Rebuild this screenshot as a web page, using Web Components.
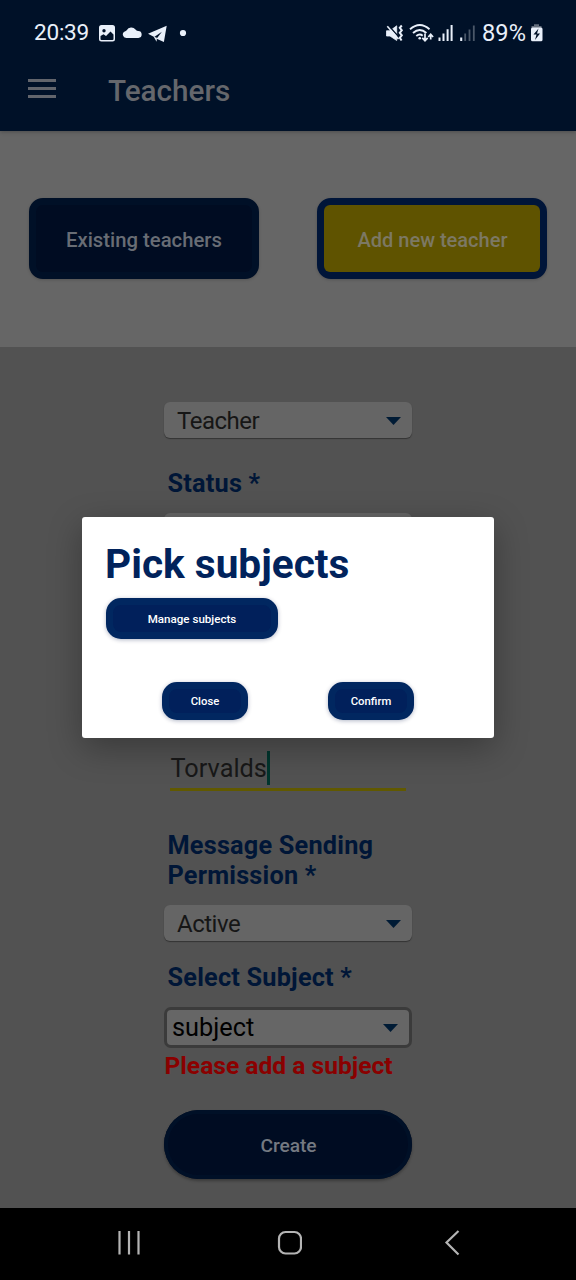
<!DOCTYPE html>
<html lang="en"><head><meta charset="utf-8"><title>Teachers</title>
<style>html,body{margin:0;padding:0;background:#000}body{font-family:Roboto,"Liberation Sans",sans-serif;width:576px;height:1280px;overflow:hidden}</style>
</head><body>
<teachers-app></teachers-app>
<script>
const define = (name, html) => customElements.define(name, class extends HTMLElement {
  constructor() {
    super();
    const t = document.createElement('template');
    t.innerHTML = html;
    this.attachShadow({ mode: 'open' }).append(t.content.cloneNode(true));
  }
});

define('status-bar', `
<style>
:host{display:flex;height:66px;box-sizing:border-box;padding:0 33px 0 34px;align-items:center;color:#e9f0fa;font-size:22.6px;line-height:26px}
svg{display:block;flex:none}
.t{letter-spacing:-.25px;width:64px}
.l{width:104px}
.r{margin-left:auto;width:98px}
.p{width:48px;letter-spacing:.1px;font-size:23.600px;white-space:nowrap}
</style>
<span class="t">20:39</span>
<svg class="l" width="104" height="26" viewBox="98 20 104 26" fill="#e9f0fa">
 <path fill-rule="evenodd" d="M101.500 25h11a2.500 2.500 0 0 1 2.500 2.500v11.500a2.500 2.500 0 0 1-2.500 2.500h-11a2.500 2.500 0 0 1-2.500-2.500v-11.500a2.500 2.500 0 0 1 2.500-2.500zM100.500 36v3q0 1 1 1h11q1 0 1-1v-4.500l-3-3-4.500 4.500-2.500-1.800zM104 29a1.700 1.700 0 1 0 0 3.400 1.700 1.700 0 0 0 0-3.400z"/>
 <path d="M126.300 38a3.500 3.500 0 0 1-1.600-6.600q1.300-.5 2-1.200a5.300 5.300 0 0 1 8.800-.6q.8 1.200 2.500 1.400a3.500 3.500 0 0 1 .3 7z"/>
 <path d="M148 33.700L166.700 25.700l-2.800 16.300-7.300-3.300 5.300-6.900-7.700 5.300z"/><path d="M153.700 36.800l3.200 1-.3 3.900z"/>
 <circle cx="183" cy="33" r="3.100"/>
</svg>
<svg class="r" width="98" height="26" viewBox="384 20 98 26" fill="none" stroke="#e9f0fa">
 <path fill="#e9f0fa" stroke-width=".8" stroke-linejoin="round" d="M386.500 30.800h3.500l6.700-5v14.700l-6.700-4.500h-3.500z"/>
 <path d="M388.500 25.500L399 37.300" stroke="#001128" stroke-width="1.400"/><path d="M387.300 26.300L398.500 39" stroke-width="1.600"/>
 <path d="M401.800 25.500l-2 2.300 2 2.500-2 2.500 2 2.500-2 2.500 1.800 2.700" stroke-width="2"/>
 <path d="M410 29.300q9.800-8.600 19.500 0M413 33q6.700-5.800 13.400 0M416.300 36q3.400-2.800 6.400-.3" stroke-width="1.900"/>
 <circle cx="419.700" cy="38.200" r="1.300" fill="#e9f0fa" stroke="none"/>
 <path d="M425 33.500v6.800M422.300 37.800l2.700 2.900 2.700-2.900M430.700 39.500v-5M428.300 37l2.400-2.700 2.400 2.700" stroke-width="1.700"/>
 <path d="M439.500 37.500v3.500M443.500 33.500v7.500M447.600 29.300v11.700M451.600 25v16" stroke-width="2"/>
 <path d="M461.200 37.500v3.500" stroke-width="2.100"/><path d="M465.200 33.500v7.500M469.500 29.500v11.500M473.800 25.500v15.500" stroke="#4b5869" stroke-width="1.800"/>
</svg>
<span class="p">89%</span>
<svg width="13" height="26" viewBox="530 20 13 26"><path d="M531.500 28v-2h2.500v-1.800h5v1.800h2.500v2z" fill="#626c7b"/><rect x="531" y="27.500" width="11.500" height="13.700" rx="1.500" fill="#e9f0fa"/><path d="M538.500 28.500l-5 6h3l-1.500 5.500 5-6.500h-3z" fill="#001128"/></svg>
`);

define('app-bar', `
<style>
:host{display:flex;height:65px;align-items:flex-start;color:#65676c;padding-left:28px}
.m{display:flex;flex-direction:column;gap:5px;padding-top:13px;width:28px}
.m i{height:3px;background:#62656c}
h1{margin:0 0 0 52px;font-size:29.700px;line-height:36px;font-weight:500;padding-top:7px}
</style>
<div class="m"><i></i><i></i><i></i></div><h1><slot></slot></h1>
`);

define('tab-button', `
<style>
:host{display:flex;box-sizing:border-box;width:230px;height:81px;border:7px solid #001027;border-radius:14px;background:#000c22;color:#686d75;font-size:20.300px;font-weight:500;align-items:center;justify-content:center;box-shadow:0 1px 3px rgba(0,0,0,.18);padding-top:3px}
:host([active]){background:#001539;border-color:#001539;padding:0;font-size:20px}
span{display:flex;align-items:center;justify-content:center;width:100%;height:100%;border-radius:6px}
:host([active]) span{background:#5f5300;color:#7c7864;padding:3px 0 0 1px;box-sizing:border-box}
</style><span><slot></slot></span>
`);

define('field-label', `
<style>:host{display:block;box-sizing:border-box;padding:1px 0 0 3.500px;margin-bottom:14px;font-size:25.300px;letter-spacing:.2px;line-height:30px;font-weight:700;color:#001637}</style><slot></slot>
`);

define('drop-down', `
<style>
:host{display:flex;box-sizing:border-box;height:36px;border-radius:6px;background:#656565;color:#161616;font-size:24px;letter-spacing:-.5px;align-items:center;justify-content:space-between;padding:2px 11px 0 13px;box-shadow:0 1px 1px #333}
:host([outlined]){height:41px;border:3px solid #3b3b3b;color:#000;font-size:25.300px;letter-spacing:0;padding:0 11px 0 5px;box-shadow:none;border-radius:7px;background:#666}
svg{display:block;flex:none}
</style><span><slot></slot></span><svg width="15" height="8" viewBox="0 0 15 8"><path d="M0 0h15L7.500 8z" fill="#001b35"/></svg>
`);

define('text-input', `
<style>
:host{display:flex;box-sizing:border-box;height:40px;margin:0 6px;border-bottom:3px solid #615900;font-size:25.300px;color:#181818;align-items:flex-start}
span{line-height:36px;padding-left:.5px}
i{width:3px;height:34px;background:#00352d}
</style><span><slot></slot></span><i></i>
`);

define('teacher-form', `
<style>
:host{display:flex;flex-direction:column;height:861px;box-sizing:border-box;padding:55px 164px 0;background:#525252}
.status{margin-top:30px}.name{margin-top:202px}.perm{margin-top:39px}.subj{margin-top:21px}
.err{margin:3px 0 29px .5px;color:#8a0000;font-size:24.600px;line-height:30px;font-weight:700;white-space:nowrap}
button{font:500 19.200px Roboto,sans-serif;letter-spacing:-.1px;height:69px;border:0;border-radius:35px;background:#000c22;color:#747981;box-shadow:inset 0 0 0 4px #001027,0 2px 3px rgba(0,0,0,.3);padding:1px 0 0 1px}
</style>
<drop-down>Teacher</drop-down>
<field-label class="status">Status *</field-label>
<drop-down></drop-down>
<text-input class="name">Torvalds</text-input>
<field-label class="perm">Message Sending Permission *</field-label>
<drop-down>Active</drop-down>
<field-label class="subj">Select Subject *</field-label>
<drop-down outlined>subject</drop-down>
<div class="err">Please add a subject</div>
<button>Create</button>
`);

define('dialog-button', `
<style>:host{display:flex;box-sizing:border-box;width:86px;height:38px;border:7px solid #012760;border-radius:15px;background:#01205b;color:#fff;font-size:11.300px;font-weight:500;align-items:center;justify-content:center;box-shadow:0 1px 4px rgba(0,20,70,.3);white-space:nowrap}
:host([wide]){width:172px;height:41px;font-size:11.600px}</style><slot></slot>
`);

define('pick-dialog', `
<style>
:host{display:block;box-sizing:border-box;width:412px;height:221px;background:#fff;border-radius:3px;box-shadow:0 10px 34px rgba(0,0,0,.3);padding:23px 24px 0}
h2{margin:0 0 0 -1px;font-size:40.600px;line-height:48px;font-weight:700;color:#01235c;white-space:nowrap}
.one{margin-top:10px}
.row{display:flex;gap:80px;margin:43px 0 0 56px}
</style>
<h2><slot></slot></h2>
<dialog-button class="one" wide>Manage subjects</dialog-button>
<div class="row"><dialog-button>Close</dialog-button><dialog-button>Confirm</dialog-button></div>
`);

define('nav-bar', `
<style>:host{display:flex;box-sizing:border-box;height:72px;background:#000;align-items:center;justify-content:space-between;padding:0 114px 2px 116px}svg{display:block}</style>
<svg width="26" height="26" viewBox="116 1230 26 26" stroke="#b4b4b4" stroke-width="2.200" fill="none"><path d="M119.500 1231v23.500M129 1231v23.500M138.500 1231v23.500"/></svg>
<svg width="26" height="26" viewBox="276 1230 26 26" stroke="#b4b4b4" stroke-width="2.200" fill="none"><rect x="279" y="1232" width="22" height="21.500" rx="6.500"/></svg>
<svg width="26" height="26" viewBox="436 1230 26 26" stroke="#b4b4b4" stroke-width="2.200" fill="none"><path d="M458.500 1231L446.500 1242.500 458.500 1254.500"/></svg>
`);

define('teachers-app', `
<style>
:host{display:block;position:relative;width:576px;height:1280px}
header{background:#001128;position:relative;box-shadow:0 1px 4px rgba(0,0,0,.25)}
.tabs{display:flex;box-sizing:border-box;height:216px;padding:67px 29px 0;justify-content:space-between;background:#666}
pick-dialog{position:absolute;left:82px;top:517px}
</style>
<header><status-bar></status-bar><app-bar>Teachers</app-bar></header>
<div class="tabs"><tab-button>Existing teachers</tab-button><tab-button active>Add new teacher</tab-button></div>
<teacher-form></teacher-form>
<nav-bar></nav-bar>
<pick-dialog>Pick subjects</pick-dialog>
`);
</script></body></html>
